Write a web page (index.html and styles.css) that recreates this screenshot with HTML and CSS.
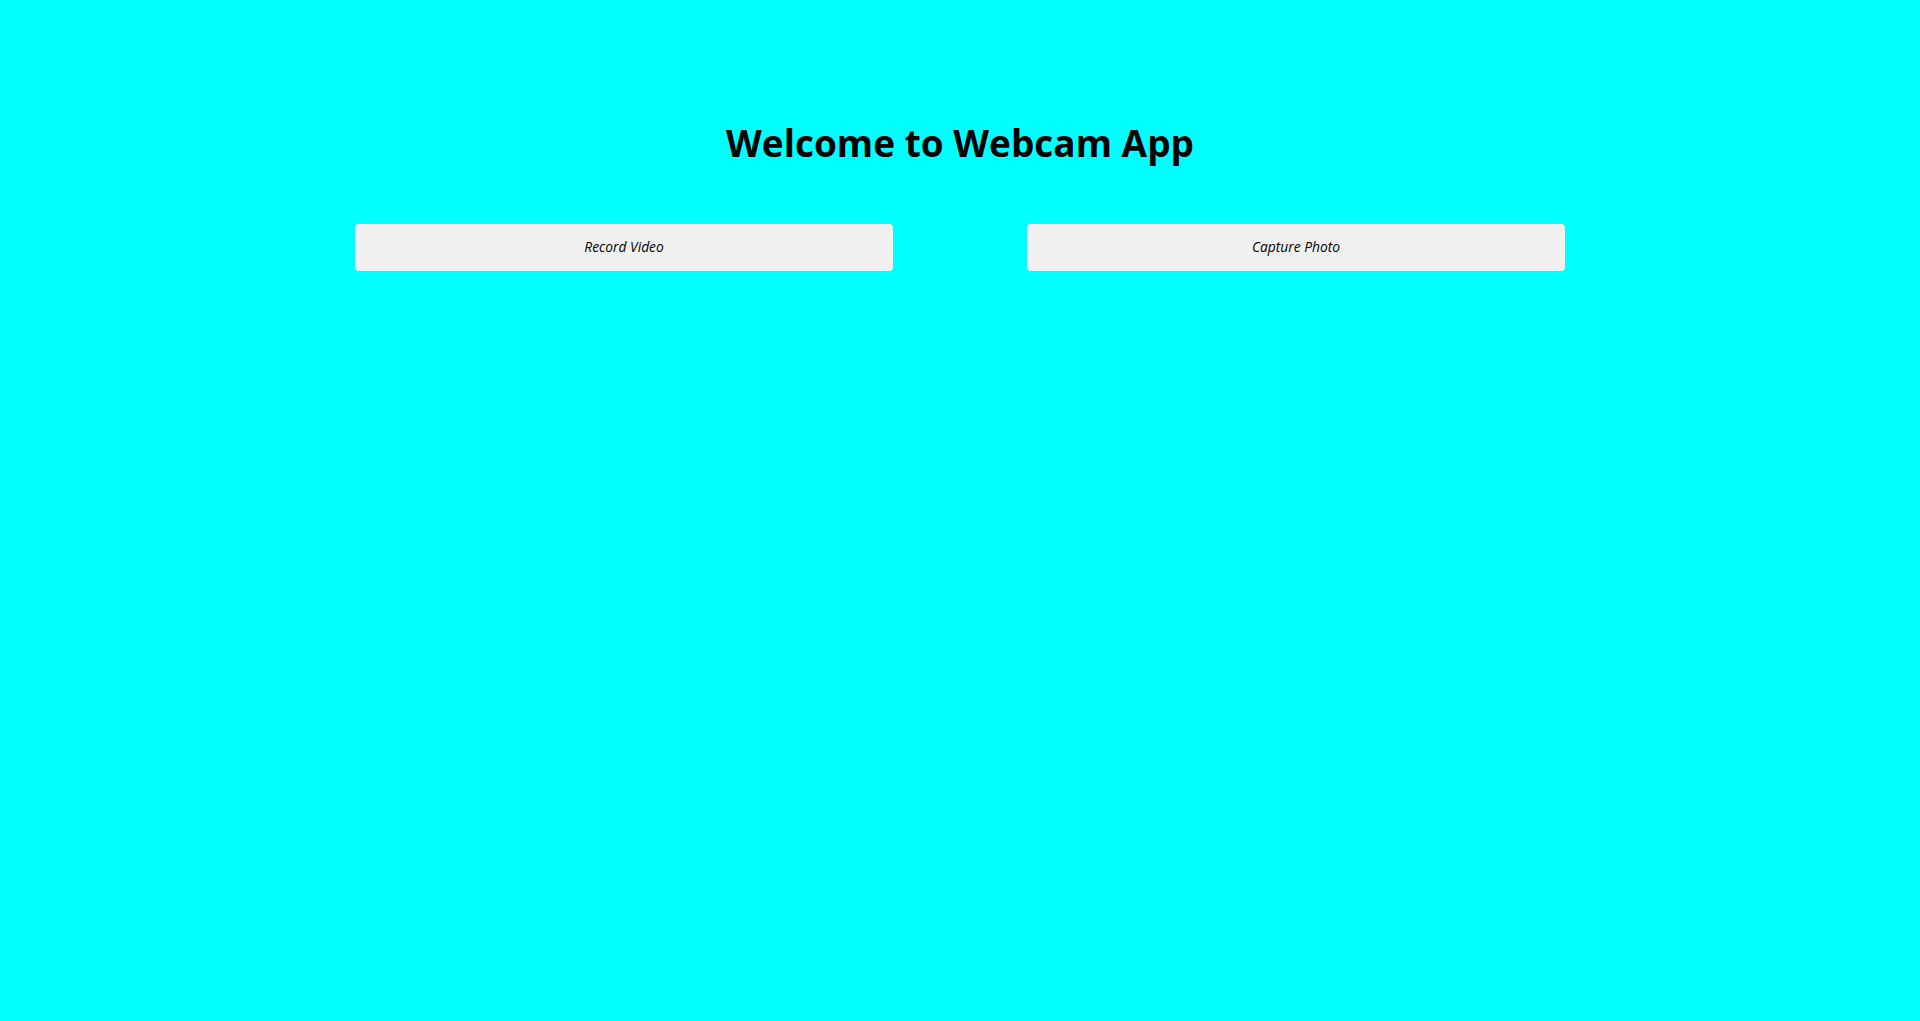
FILE: index.html
```html
<!DOCTYPE html>
<html>
<head>
<meta charset="utf-8">
<link rel="stylesheet" href="styles.css">
</head>
<body>
<h1 class="title">Welcome to Webcam App</h1>
<div class="actions">
  <button class="action">Record Video</button>
  <button class="action">Capture Photo</button>
</div>
</body>
</html>
```
FILE: styles.css
```css
html, body {
  margin: 0;
  padding: 0;
}
body {
  background: #00ffff;
  font-family: "Open Sans", "Noto Sans", sans-serif;
  min-height: 1021px;
}
.title {
  margin: 0;
  padding-top: 118px;
  text-align: center;
  font-size: 37px;
  line-height: 50px;
  font-weight: 700;
  color: #000;
}
.actions {
  display: flex;
  justify-content: center;
  margin-top: 56px;
}
.action {
  width: 28%;
  height: 47px;
  margin: 0 3.5%;
  padding: 0 0 2px;
  background: #f0f0f0;
  border: none;
  border-radius: 4px;
  font-family: "Open Sans", sans-serif;
  font-style: italic;
  font-size: 13.8px;
  color: #000;
}
```
